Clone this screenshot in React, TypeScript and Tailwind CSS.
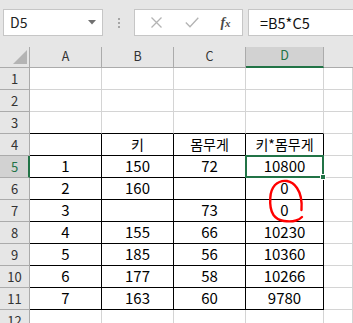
import React from "react";

const DATA: string[][] = [
  [],
  [],
  [],
  ["", "키", "몸무게", "키*몸무게"],
  ["1", "150", "72", "10800"],
  ["2", "160", "", "0"],
  ["3", "", "73", "0"],
  ["4", "155", "66", "10230"],
  ["5", "185", "56", "10360"],
  ["6", "177", "58", "10266"],
  ["7", "163", "60", "9780"],
  [],
];

const COLS = ["A", "B", "C", "D"];

function cellBorder(row: number, col: number) {
  // row is 1-based like the sheet, col 0..3 = A..D, 4 = E
  if (col < 4 && row >= 4 && row <= 11) return "border-r-black border-b-black";
  if (col < 4 && row === 3) return "border-r-[#d4d4d4] border-b-black";
  return "border-r-[#d4d4d4] border-b-[#d4d4d4]";
}

function FormulaBar() {
  return (
    <div className="h-[47px] bg-[#e6e6e6] flex items-start pt-[9px] pl-[3px]">
      <div className="w-[100px] h-[27px] bg-white border border-[#c6c6c6] flex items-center pl-[6px] pr-[6px]">
        <span className="text-[14px] text-[#222] flex-1">D5</span>
        <svg width="8" height="5" viewBox="0 0 8 5">
          <path d="M0 0 L8 0 L4 4.5 Z" fill="#707070" />
        </svg>
      </div>
      <div className="w-[31px] h-[27px] flex flex-col items-center justify-center gap-[2px]">
        <span className="w-[2px] h-[2px] bg-[#a6a6a6]" />
        <span className="w-[2px] h-[2px] bg-[#a6a6a6]" />
        <span className="w-[2px] h-[2px] bg-[#a6a6a6]" />
      </div>
      <div className="w-[109px] h-[27px] bg-white border border-[#c6c6c6] flex items-center">
        <div className="w-[37px] flex justify-center pl-[5px]">
          <svg width="11" height="11" viewBox="0 0 11 11">
            <path d="M0.5 0.5 L10.5 10.5 M10.5 0.5 L0.5 10.5" stroke="#b4b4b4" strokeWidth="1.3" />
          </svg>
        </div>
        <div className="w-[37px] flex justify-center pl-[3px]">
          <svg width="14" height="11" viewBox="0 0 14 11">
            <path d="M0.8 5.5 L5 9.8 L13.3 0.8" stroke="#b4b4b4" strokeWidth="1.3" fill="none" />
          </svg>
        </div>
        <div className="flex-1 flex justify-center">
          <span className="font-[family-name:'Liberation_Serif',serif] italic font-bold text-[14px] text-[#4a4a4a] leading-none">
            f<span className="text-[11px]">x</span>
          </span>
        </div>
      </div>
      <div className="ml-[5px] flex-1 h-[27px] bg-white border border-r-0 border-[#c6c6c6] flex items-center pl-[11px]">
        <span className="text-[14.5px] text-[#111]">=B5*C5</span>
      </div>
    </div>
  );
}

function HeaderRow() {
  return (
    <>
      <div className="bg-[#e6e6e6] border-r border-b border-[#ababab] relative">
        <svg className="absolute left-[13px] top-[3px]" width="14" height="14" viewBox="0 0 14 14">
          <path d="M14 0 L14 14 L0 14 Z" fill="#b4b4b4" />
        </svg>
      </div>
      {COLS.map((c) =>
        c === "D" ? (
          <div
            key={c}
            className="bg-[#d2d2d2] border-r border-r-[#ababab] border-b-2 border-b-[#217346] flex items-center justify-center text-[12.5px] text-[#217346] pb-[2px]"
          >
            {c}
          </div>
        ) : (
          <div
            key={c}
            className="bg-[#e6e6e6] border-r border-b border-[#ababab] flex items-center justify-center text-[12.5px] text-[#333] pb-[1px]"
          >
            {c}
          </div>
        )
      )}
      <div className="bg-[#e6e6e6] border-b border-[#ababab]" />
    </>
  );
}

function SheetRow({ row, values }: { row: number; values: string[] }) {
  const selectedRow = row === 5;
  return (
    <>
      <div
        className={
          selectedRow
            ? "bg-[#d2d2d2] border-r-2 border-r-[#217346] border-b border-b-[#ababab] flex items-center justify-center text-[13px] text-[#217346] pl-[1px]"
            : "bg-[#e6e6e6] border-r border-b border-[#ababab] flex items-center justify-center text-[13px] text-[#333]"
        }
      >
        {row}
      </div>
      {[0, 1, 2, 3, 4].map((col) => {
        const v = values[col] ?? "";
        const korean = row === 4;
        const selected = row === 5 && col === 3;
        return (
          <div
            key={col}
            className={`${selected ? "relative" : ""} border-r border-b ${cellBorder(row, col)} flex items-center justify-center ${
              korean ? "text-[14px]" : "text-[15px]"
            } text-black`}
          >
            {v}
            {selected && (
              <div className="absolute -top-[1px] -left-[1px] -right-[1px] -bottom-[1px] border-2 border-[#217346] z-10">
                <div className="absolute -right-[4px] -bottom-[4px] w-[6px] h-[6px] bg-[#217346] border border-white" />
              </div>
            )}
          </div>
        );
      })}
    </>
  );
}

export default function App() {
  return (
    <div className="relative w-[353px] h-[323px] overflow-hidden bg-white font-[family-name:'Noto_Sans_CJK_KR','Noto_Sans',sans-serif]">
      <FormulaBar />
      <div className="relative z-0 grid grid-cols-[30px_72px_72px_72px_78px_1fr] grid-rows-[21px_repeat(12,22px)]">
        <HeaderRow />
        {DATA.map((vals, i) => (
          <SheetRow key={i} row={i + 1} values={vals} />
        ))}
      </div>
      {/* hand-drawn red circle around the zeros */}
      <div className="absolute inset-0 z-30 pointer-events-none">
        <svg width="353" height="323" viewBox="0 0 353 323">
          <path
            d="M301.5 210 Q302.5 196 297 188 Q293 182 287 181 Q280 180 275 185 Q270.5 190 270.3 198 Q269.5 209 273.5 215 Q277 220 284 221 Q291 222 296 220.5 Q299.5 219.5 302 217"
            stroke="#ff0000"
            strokeWidth="2.4"
            fill="none"
            strokeLinecap="round"
            strokeLinejoin="round"
          />
        </svg>
      </div>
    </div>
  );
}
